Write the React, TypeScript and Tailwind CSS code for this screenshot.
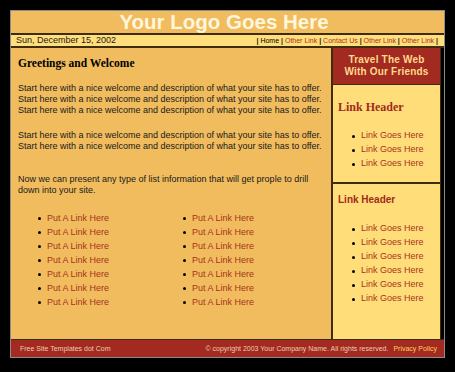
const navLinks = ["Home", "Other Link", "Contact Us", "Other Link", "Other Link"];

const welcome =
  "Start here with a nice welcome and description of what your site has to offer.";

const Bullet = () => (
  <span className="w-[3px] h-[3px] rounded-full bg-black shrink-0" />
);

interface ILinkListProps {
  label: string;
  count: number;
  className?: string;
}

const LinkList = ({ label, count, className }: ILinkListProps) => (
  <ul className={className}>
    {Array.from({ length: count }).map((_, i) => (
      <li key={i} className="flex items-center gap-[6px] h-[14px]">
        <Bullet />
        <a className="text-[#a8321c]">{label}</a>
      </li>
    ))}
  </ul>
);

const App = () => {
  return (
    <div className="min-h-[372px] bg-black pt-[10px] font-['Liberation_Sans',Arial,sans-serif]">
      <div className="ml-[10px] w-[435px] border border-[#8c8c8c]">
        {/* header */}
        <div className="h-[22px] bg-[#f0bc5e] border-b-2 border-[#3d2c0f] box-content flex items-center justify-center">
          <div className="text-[20.5px] leading-[22px] font-bold text-[#fff6dc] pr-[7px]">
            Your Logo Goes Here
          </div>
        </div>

        {/* date bar */}
        <div className="h-[11px] box-content bg-[#ffde7b] border-b-2 border-[#3d2c0f] flex items-center justify-between pl-[5px] pr-[6px]">
          <div className="text-[9px] leading-[11px] text-[#1a1a1a]">
            Sun, December 15, 2002
          </div>
          <div className="text-[7px] leading-[11px] text-[#1a1a1a]">
            {navLinks.map((link, i) => (
              <span key={i}>
                <span className="font-bold">|</span>{" "}
                <a className={i === 0 ? "text-black" : "text-[#a8321c]"}>
                  {link}
                </a>{" "}
              </span>
            ))}
            <span className="font-bold">|</span>
          </div>
        </div>

        {/* body */}
        <div className="flex h-[291px] box-content border-b border-[#3d2c0f]">
          <div className="w-[320px] bg-[#f0bc5e] pl-[7px] pt-[8px] text-[9px] leading-[11px] text-[#1a1a1a]">
            <h1 className="font-['Liberation_Serif',serif] font-bold text-[11.5px] leading-[14px] text-black">
              Greetings and Welcome
            </h1>
            <p className="mt-[13px]">
              {welcome}
              <br />
              {welcome}
              <br />
              {welcome}
            </p>
            <p className="mt-[14px]">
              {welcome}
              <br />
              {welcome}
            </p>
            <p className="mt-[22px]">
              Now we can present any type of list information that will get
              prople to drill
              <br />
              down into your site.
            </p>
            <div className="flex mt-[15px] pl-[20px]">
              <LinkList label="Put A Link Here" count={7} className="w-[145px]" />
              <LinkList label="Put A Link Here" count={7} />
            </div>
          </div>

          <div className="w-[110px] bg-[#ffdd78] border-l-2 border-r border-[#3d2c0f] flex flex-col">
            <div className="h-[36px] box-content bg-[#a32a20] border-b border-[#3d2c0f] flex flex-col items-center justify-center text-[10px] leading-[12px] font-bold text-[#ffd98c] tracking-[0.2px]">
              <div>Travel The Web</div>
              <div>With Our Friends</div>
            </div>
            <div className="h-[97px] box-content border-b-2 border-[#3d2c0f] pl-[5px]">
              <h2 className="mt-[15px] font-['Liberation_Serif',serif] font-bold text-[12px] leading-[14px] text-[#a32a20]">
                Link Header
              </h2>
              <LinkList
                label="Link Goes Here"
                count={3}
                className="mt-[15px] pl-[14px] text-[9px]"
              />
            </div>
            <div className="pl-[5px]">
              <h2 className="mt-[10px] font-bold text-[10px] leading-[12px] text-[#a32a20]">
                Link Header
              </h2>
              <LinkList
                label="Link Goes Here"
                count={6}
                className="mt-[16px] pl-[14px] text-[9px]"
              />
            </div>
          </div>
        </div>

        {/* footer */}
        <div className="h-[17px] bg-[#a32a20] flex items-center justify-between pl-[9px] pr-[7px] text-[7px] leading-[9px]">
          <div className="text-[#eccdb0]">Free Site Templates dot Com</div>
          <div className="text-[#eccdb0]">
            © copyright 2003 Your Company Name. All rights reserved.{" "}
            <a className="ml-[3px] text-[#ffd15e]">Privacy Policy</a>
          </div>
        </div>
      </div>
    </div>
  );
};

export default App;
